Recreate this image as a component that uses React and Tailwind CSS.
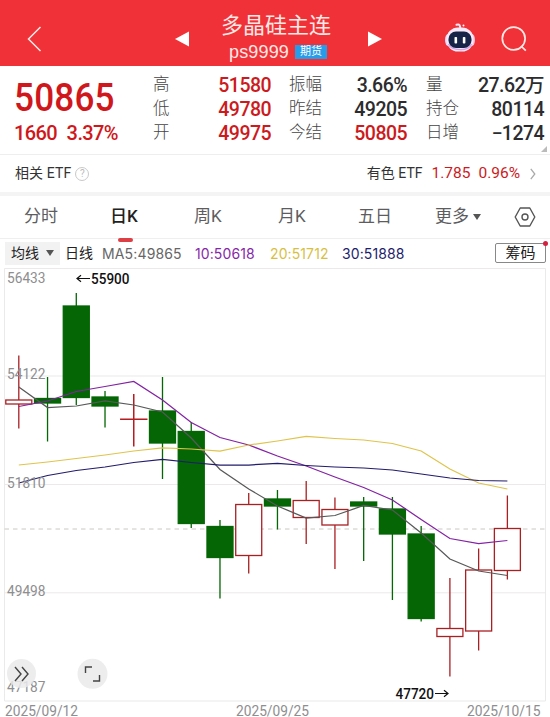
import clsx from "clsx";

// one entry per trading day, in chart units: [up, high, bodyTop, bodyBottom, low]
const candles = [
  [true, 355.5, 400, 404, 428.5],
  [false, 377, 398.5, 403, 441.5],
  [false, 293, 306, 397.5, 405],
  [false, 391, 397, 406, 427.5],
  [true, 394, 419.3, 419.3, 446.5],
  [false, 377, 411, 443, 479],
  [false, 422, 431.5, 523.5, 528],
  [false, 520, 526.5, 557.5, 598.5],
  [true, 493, 504.5, 555.5, 573.5],
  [false, 490, 499, 506, 529.5],
  [true, 481, 500.5, 517.5, 544],
  [true, 497.5, 509.5, 525, 569],
  [false, 497, 502, 506, 561],
  [false, 497, 509, 534, 600],
  [false, 526, 534, 618.5, 621.5],
  [true, 578, 628.5, 636.5, 676.5],
  [true, 548.5, 570, 631, 650.5],
  [true, 495.5, 528.5, 570.5, 579.5],
];

const averages = [
  { color: "#58585a", points: [387, 407.5, 406, 401, 405, 412, 438, 469.5, 489, 506, 518, 515.5, 505.5, 510, 533, 559, 571, 575.5] },
  { color: "#8322a3", points: [406.5, 401, 391.5, 386.5, 381.5, 400, 422.5, 437.5, 445, 456, 466, 477, 487.5, 500, 519.5, 538.5, 543.5, 540.5] },
  { color: "#dfc44c", points: [465, 462, 458.5, 455, 451, 448, 449, 451, 445, 441, 436.5, 438.5, 440, 443.5, 451, 469, 483, 489] },
  { color: "#211c6b", points: [483, 475.5, 470.5, 467, 462.5, 459.5, 462.5, 465, 465, 463.5, 465.5, 467, 468, 470, 474, 478, 480.5, 481] },
];

const priceLabels = [
  ["56433", 283],
  ["54122", 379],
  ["51810", 487.5],
  ["49498", 595.5],
  ["47187", 692],
];

const quoteColumns = [
  {
    className: "w-[118px]",
    rows: [["高", "51580", true], ["低", "49780", true], ["开", "49975", true]],
  },
  {
    className: "ml-[18px] w-[118px]",
    rows: [["振幅", "3.66%"], ["昨结", "49205"], ["今结", "50805", true]],
  },
  {
    className: "ml-[19px] w-[118px]",
    rows: [["量", "27.62万"], ["持仓", "80114"], ["日增", "−1274"]],
  },
];

const xAt = (i) => 18.8 + i * 28.74;

const Num = ({ width, className, children }) => (
  <span className={clsx("inline-block whitespace-nowrap", className)} style={{ width }}>
    {children}
  </span>
);

const Header = () => (
  <header className="flex h-[66px] items-center bg-[#f03238] text-[#ffe9e6]">
    <svg className="ml-[26px] mt-[11px] h-7 w-4" viewBox="0 0 16 28" fill="none" stroke="currentColor" strokeWidth="1.5">
      <path d="M14.5 2 2.5 14l12 12" />
    </svg>
    <svg className="ml-[133px] mt-[11px] h-4 w-[14px]" viewBox="0 0 14 16" fill="#fff">
      <path d="M14 .5v15L0 8z" />
    </svg>
    <div className="ml-[27px] flex w-[120px] flex-col items-center pt-[6px]">
      <h1 className="whitespace-nowrap text-[22px] leading-[31px]">多晶硅主连</h1>
      <div className="flex items-center gap-[6px] pl-1">
        <span className="font-['Liberation_Sans'] text-[18px] leading-[22px] tracking-[0.15px]">ps9999</span>
        <span className="flex h-[14px] w-8 items-center justify-center bg-[#279ce9] text-[11px] leading-none text-white">期货</span>
      </div>
    </div>
    <svg className="ml-8 mt-[11px] h-4 w-[14px]" viewBox="0 0 14 16" fill="#fff">
      <path d="M0 .5v15L14 8z" />
    </svg>
    <svg className="ml-[62px] mt-[9px] h-8 w-8" viewBox="0 0 32 32">
      <path d="M12.5 2.8c3-1.2 3.8.6 3.8 4" fill="none" stroke="#f5e4f4" strokeWidth="2" strokeLinecap="round" />
      <circle cx="19.5" cy="3.5" r="1" fill="#fff" />
      <ellipse cx="4" cy="18" rx="3" ry="6" fill="#ddd8ff" />
      <ellipse cx="28" cy="18" rx="3" ry="6" fill="#ffc0dc" />
      <rect x="2.5" y="5.5" width="27" height="24" rx="11.5" fill="#f8e9f8" />
      <path d="M4.5 22c3 7 20 8 23 0" fill="none" stroke="#d0a8ea" strokeWidth="1.5" />
      <rect x="4.5" y="9.5" width="23" height="16.5" rx="7.5" fill="#172448" />
      <rect x="10.5" y="15" width="2.6" height="6.5" rx=".8" fill="#fff" />
      <rect x="18.8" y="15" width="2.6" height="6.5" rx=".8" fill="#fff" />
    </svg>
    <svg className="ml-[25px] mt-[11px] h-[26px] w-[26px]" viewBox="0 0 26 26" fill="none" stroke="currentColor" strokeWidth="1.7">
      <circle cx="12.7" cy="12.5" r="11.4" />
      <path d="m20 20 4.8 4.7" />
    </svg>
  </header>
);

const Quote = () => (
  <section className="relative flex h-[88px] pt-[7px] text-[#2c2c2e]">
    <div className="ml-[14px] mr-[25px] w-[114px] font-medium text-[#d0171b]">
      <div className="mt-[3px] h-[45px] origin-left scale-x-[0.9] text-[39px] leading-[45px] tracking-[0.2px]">50865</div>
      <div className="flex h-6 w-[104px] justify-between text-[20px] leading-6 tracking-[-0.6px]">
        <Num>1660</Num>
        <Num>3.37%</Num>
      </div>
    </div>
    {quoteColumns.map(({ className, rows }) => (
      <div key={rows[0][0]} className={className}>
        {rows.map(([label, value, red]) => (
          <div key={label} className="flex h-[24.3px] items-center justify-between whitespace-nowrap">
            <span className="text-[16.5px] font-light text-[#444]">{label}</span>
            <span className={clsx("text-[19.5px] font-medium tracking-[-0.55px]", red && "text-[#cc1a1d]")}>{value}</span>
          </div>
        ))}
      </div>
    ))}
    <span className="absolute bottom-[2px] right-[3px] h-[6px] w-[6px] bg-[#bbb] [clip-path:polygon(100%_0,100%_100%,0_100%)]" />
  </section>
);

const EtfRow = () => (
  <section className="flex h-[38px] items-center border-t border-[#eee] pl-[15px] pr-[14px] text-[14px] text-[#333]">
    <span className="tracking-[0.1px]">相关 ETF</span>
    <span className="ml-[4px] flex h-[14px] w-[14px] items-center justify-center rounded-full border border-[#c9c9c9] text-[10px] leading-none text-[#bbb]">?</span>
    <span className="ml-auto">有色 ETF</span>
    <span className="ml-[9px] text-[15.5px] text-[#cc1a1d]">1.785</span>
    <span className="ml-[8px] text-[15.5px] text-[#cc1a1d]">0.96%</span>
    <svg className="ml-[10px] h-3 w-[6px]" viewBox="0 0 6 12" fill="none" stroke="#aaa" strokeWidth="1.3">
      <path d="m.8.8 4 5.2-4 5.2" />
    </svg>
  </section>
);

const Tabs = () => (
  <nav className="flex h-[46px] items-center border-t-4 border-[#f4f4f4] text-[17px] text-[#5d5d5f]">
    <span className="ml-6 w-[86px]">分时</span>
    <span className="relative w-[84px] font-medium text-[#222]">
      日K
      <span className="absolute left-[8px] top-[34px] h-[4px] w-[15px] rounded-full bg-[#dc4046]" />
    </span>
    <span className="w-[84px]">周K</span>
    <span className="w-20">月K</span>
    <span className="w-[77px]">五日</span>
    <span>更多</span>
    <svg className="ml-[4px] h-[6px] w-2" viewBox="0 0 8 6" fill="#555">
      <path d="M0 0h8L4 6z" />
    </svg>
    <svg className="ml-[33px] h-5 w-[22px]" viewBox="0 0 22 20" fill="none" stroke="#555" strokeWidth="1.4">
      <path d="M6.2 1h9.6l5 9-5 9H6.2l-5-9z" strokeLinejoin="round" />
      <circle cx="11" cy="10" r="3" />
    </svg>
  </nav>
);

const AverageBar = () => (
  <section className="flex h-[29px] items-center border-t border-[#efefef] pl-[5px] pr-1 text-[14px] text-[#222]">
    <div className="flex h-[23px] w-[55px] items-center justify-between bg-[#f2f2f2] pl-[6px] pr-[6px]">
      均线
      <svg className="h-[6px] w-2" viewBox="0 0 8 6" fill="#555">
        <path d="M0 0h8L4 6z" />
      </svg>
    </div>
    <span className="ml-[5px] w-[37px]">日线</span>
    <span className="w-[93px] font-['Inter'] text-[14px] tracking-[0.15px] text-[#666]">MA5:49865</span>
    <span className="w-[75px] font-['Inter'] text-[14px] tracking-[0.1px] text-[#8727a8]">10:50618</span>
    <span className="w-[72px] font-['Inter'] text-[14px] tracking-[0.1px] text-[#d8bf42]">20:51712</span>
    <span className="font-['Inter'] text-[14px] tracking-[0.1px] text-[#231e6b]">30:51888</span>
    <div className="relative ml-auto flex h-5 w-[51px] items-center justify-center rounded-[2px] border border-[#888] text-[15px]">
      筹码
      <span className="absolute -right-[3px] -top-[3px] h-[5px] w-[5px] rounded-full bg-[#d32240]" />
    </div>
  </section>
);

const Candle = ({ x, up, high, top, bottom, low }) => {
  const color = up ? "#a92023" : "#046604";
  if (top === bottom) {
    return <path d={`M${x} ${high}V${low}M${x - 13.7} ${top}h27.4`} stroke="#b51d20" strokeWidth="1.5" fill="none" />;
  }
  return (
    <g stroke={color} strokeWidth="1.3">
      <path d={`M${x} ${high}V${top}M${x} ${bottom}V${low}`} />
      <rect x={x - 13} y={top} width="26" height={bottom - top} fill={up ? "#fff" : color} />
    </g>
  );
};

const Chart = () => (
  <section className="relative h-[450px]">
    <svg className="block h-[450px] w-[550px]" viewBox="0 267 550 450" fontFamily="Roboto">
      <path d="M4.5 268.5h541v432.5h-541zM4.5 376h541M4.5 484.5h541M4.5 592.8h541" fill="none" stroke="#ebe9ea" />
      <path d="M4.5 529h541" stroke="#ccc8c5" strokeDasharray="4.5 4" />
      {candles.map(([up, high, top, bottom, low], i) => (
        <Candle key={i} x={xAt(i)} up={up} high={high} top={top} bottom={bottom} low={low} />
      ))}
      {averages.map(({ color, points }) => (
        <polyline
          key={color}
          points={points.map((y, i) => `${xAt(i)},${y}`).join(" ")}
          fill="none"
          stroke={color}
          strokeWidth="1.25"
        />
      ))}
      <g fontSize="14.5" fill="#8e8e90">
        {priceLabels.map(([label, y]) => (
          <text key={label} x="7" y={y} textLength="38.5" lengthAdjust="spacingAndGlyphs">{label}</text>
        ))}
        <text x="5" y="716" textLength="73" lengthAdjust="spacingAndGlyphs">2025/09/12</text>
        <text x="236" y="716" textLength="73" lengthAdjust="spacingAndGlyphs">2025/09/25</text>
        <text x="467" y="716" textLength="73.5" lengthAdjust="spacingAndGlyphs">2025/10/15</text>
      </g>
      <g fontSize="14.5" fontWeight="500" fill="#111">
        <text x="91" y="283.5" textLength="38.5" lengthAdjust="spacingAndGlyphs">55900</text>
        <text x="395.5" y="699" textLength="38.5" lengthAdjust="spacingAndGlyphs">47720</text>
      </g>
      <path d="M90 278.5H77m4-3.2-4 3.2 4 3.2M435 693.5h13m-4-3.2 4 3.2-4 3.2" fill="none" stroke="#111" strokeWidth="1.2" />
      <g fill="none" stroke="#444" strokeWidth="1.4">
        <circle cx="21.5" cy="673.5" r="14.5" fill="#eaeaea" fillOpacity=".85" stroke="none" />
        <path d="m15 667 6 7-6 7M22 667l6 7-6 7" />
        <circle cx="92.5" cy="673.8" r="15" fill="#ededed" stroke="none" />
        <path d="M85.5 673v-6H92M99.5 675v6H93" />
      </g>
    </svg>
  </section>
);

export default function App() {
  return (
    <main className="h-[717px] w-[550px] overflow-hidden bg-white font-[Roboto,'Noto_Sans_CJK_SC',sans-serif]">
      <Header />
      <Quote />
      <EtfRow />
      <Tabs />
      <AverageBar />
      <Chart />
    </main>
  );
}
